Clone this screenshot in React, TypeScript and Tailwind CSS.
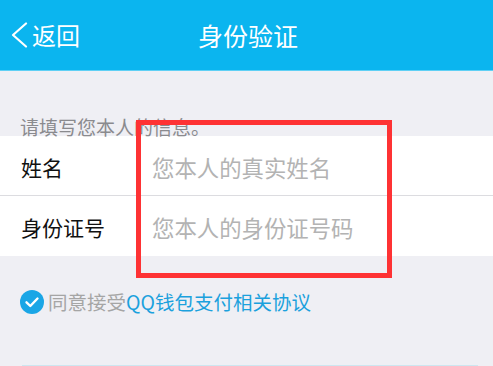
export default function App() {
  return (
    <div
      className="relative w-[493px] h-[366px] overflow-hidden bg-[#efeff4]"
      style={{ fontFamily: '"Noto Sans CJK SC", "Noto Sans", sans-serif' }}
    >
      {/* Header */}
      <div className="relative h-[71px] bg-[#0bb5ef] border-b border-[#5fd0f5] flex items-center">
        <div className="flex items-center pl-[10px] text-white">
          <svg width="18" height="26" viewBox="0 0 18 26" fill="none">
            <path d="M16 1.5 L3 13 L16 24.5" stroke="white" strokeWidth="2.2" strokeLinecap="round" strokeLinejoin="round" />
          </svg>
          <span className="text-[24px] leading-none ml-[4px]">返回</span>
        </div>
        <div className="absolute inset-x-0 top-0 h-full flex items-center justify-center pointer-events-none">
          <span className="text-white text-[25px] leading-none ml-[3px]">身份验证</span>
        </div>
      </div>

      {/* Hint */}
      <div className="h-[65px] flex items-end pl-[20px]">
        <span className="text-[19px] leading-none text-[#8a8a8e]">请填写您本人的信息。</span>
      </div>

      {/* Form */}
      <div className="bg-white">
        <div className="h-[60px] flex items-center border-b border-[#dcdce0] pt-[4px]">
          <span className="w-[152px] pl-[21px] text-[21px] text-[#111]">姓名</span>
          <span className="text-[22.4px] text-[#b3b3b3]">您本人的真实姓名</span>
        </div>
        <div className="h-[60px] flex items-center pt-[3px]">
          <span className="w-[152px] pl-[21px] text-[21px] text-[#111]">身份证号</span>
          <span className="text-[22.4px] text-[#b3b3b3]">您本人的身份证号码</span>
        </div>
      </div>

      {/* Agreement */}
      <div className="flex items-center pl-[20px] mt-[31px]">
        <svg width="24" height="24" viewBox="0 0 24 24">
          <circle cx="12" cy="12" r="12" fill="#1aa6e6" />
          <path d="M6.5 12.3 L10.3 16 L17.5 8.5" stroke="white" strokeWidth="2.4" fill="none" strokeLinecap="round" strokeLinejoin="round" />
        </svg>
        <span className="ml-[4px] text-[19.5px] text-[#a5a5a5]">同意接受</span>
        <span className="text-[19.5px] text-[#1ba1dd]">QQ钱包支付相关协议</span>
      </div>

      {/* Bottom hint line */}
      <div className="absolute left-[22px] right-[15px] bottom-0 h-[1px] bg-[#cde6f0]" />

      {/* Red highlight box */}
      <div className="absolute left-[136px] top-[120px] w-[256px] h-[158px] border-[5px] border-[#fe3234]" />
    </div>
  )
}
